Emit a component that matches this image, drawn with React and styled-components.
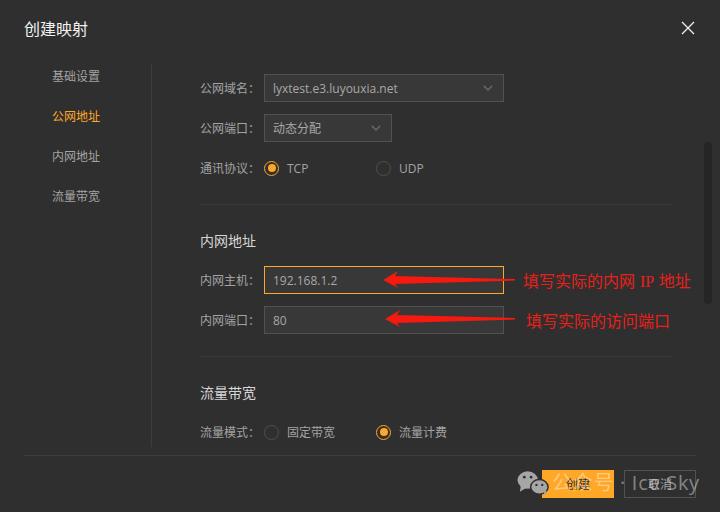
import styled, { createGlobalStyle } from 'styled-components';

const GlobalStyle = createGlobalStyle`
  html, body {
    margin: 0;
    padding: 0;
    background: #2f2f2f;
  }
`;

const Dialog = styled.div`
  position: relative;
  width: 720px;
  height: 512px;
  overflow: hidden;
  display: flex;
  flex-direction: column;
  background: #2f2f2f;
  color: #a3a3a3;
  font-family: "Open Sans", "Noto Sans CJK SC", sans-serif;
  font-size: 12px;
`;

const Header = styled.div`
  height: 56px;
  flex: none;
  box-sizing: border-box;
  padding: 0 25px 1px 24px;
  display: flex;
  align-items: center;
  justify-content: space-between;
`;

const Title = styled.div`
  font-size: 16px;
  color: #f2f2f2;
`;

const Body = styled.div`
  height: 399px;
  flex: none;
  padding: 8px 8px 0 24px;
  box-sizing: border-box;
  display: flex;
`;

const Sidebar = styled.div`
  width: 128px;
  height: 383px;
  flex: none;
  box-sizing: border-box;
  border-right: 1px solid #3d3d3d;
`;

const NavList = styled.div`
  margin-top: -8px;
  display: flex;
  flex-direction: column;
`;

const NavItem = styled.div`
  height: 40px;
  padding-left: 28px;
  display: flex;
  align-items: center;
  color: ${props => props.active ? '#ffa726' : '#a3a3a3'};
`;

const Content = styled.div`
  width: 472px;
  flex: none;
  margin-left: 48px;
  padding-top: 10px;
`;

const Row = styled.div`
  height: 28px;
  margin-bottom: 12px;
  display: flex;
  align-items: center;
`;

const Label = styled.div`
  width: 64px;
  flex: none;
`;

const Field = styled.div`
  width: ${props => props.width}px;
  height: 28px;
  box-sizing: border-box;
  padding: 0 10px 0 8px;
  display: flex;
  align-items: center;
  justify-content: space-between;
  background: #383838;
  border: 1px solid ${props => props.focused ? '#ffa726' : '#515151'};
  color: #a8a8a8;
`;

const RadioItem = styled.div`
  width: ${props => props.width}px;
  display: flex;
  align-items: center;
  gap: 8px;
`;

const RadioCircle = styled.span`
  width: 15px;
  height: 15px;
  box-sizing: border-box;
  border-radius: 50%;
  border: ${props => props.checked ? '1.5px solid #ffa726' : '1px solid #515151'};
  display: flex;
  align-items: center;
  justify-content: center;

  &::after {
    content: '';
    display: ${props => props.checked ? 'block' : 'none'};
    width: 8px;
    height: 8px;
    border-radius: 50%;
    background: #ffa726;
  }
`;

const Divider = styled.div`
  height: 1px;
  background: #3a3a3a;
  margin: ${props => props.margin};
`;

const SectionTitle = styled.div`
  height: 20px;
  line-height: 20px;
  margin-bottom: 15px;
  font-size: 14px;
  color: #d6d6d6;
`;

const Scrollbar = styled.div`
  width: 8px;
  height: 162px;
  margin: 78px 0 0 32px;
  flex: none;
  border-radius: 4px;
  background: #252525;
`;

const Footer = styled.div`
  margin: 0 24px;
  padding-top: 14px;
  border-top: 1px solid #3d3d3d;
  display: flex;
  justify-content: flex-end;
  gap: 10px;
`;

const Button = styled.div`
  width: 72px;
  height: 28px;
  box-sizing: border-box;
  display: flex;
  align-items: center;
  justify-content: center;
  background: ${props => props.primary ? '#ffa726' : 'transparent'};
  border: ${props => props.primary ? 'none' : '1px solid #515151'};
  color: ${props => props.primary ? '#2f2f2f' : '#a3a3a3'};
`;

const Note = styled.div`
  position: absolute;
  left: ${props => props.left}px;
  top: ${props => props.top}px;
  line-height: 20px;
  font-size: 16px;
  white-space: pre;
  color: #e8201a;
`;

const NoteLatin = styled.span`
  font-family: "Liberation Serif", serif;
  word-spacing: 1px;
`;

const ArrowSvg = styled.svg`
  position: absolute;
  left: ${props => props.left}px;
  top: ${props => props.top}px;
`;

const Watermark = styled.div`
  position: absolute;
  left: 517px;
  top: 467px;
  display: flex;
  align-items: center;
  font-size: 20px;
  line-height: 32px;
  white-space: pre;
  letter-spacing: 0.7px;
  color: rgba(255, 255, 255, 0.42);
`;

const Chevron = () => (
  <svg width="10" height="6" viewBox="0 0 10 6" fill="none" stroke="#666" strokeWidth="1.6">
    <path d="M0.8 0.8 L5 5 L9.2 0.8" />
  </svg>
);

const Arrow = ({ left, top, width }) => (
  <ArrowSvg left={left} top={top} width={width} height="18" viewBox={`0 0 ${width} 18`}>
    <path d={`M0 9 L15 0 L12 5 L${width} 8 L${width} 9.5 L12 13 L15 17 Z`} fill="#f5190f" />
  </ArrowSvg>
);

const Radio = ({ checked, width, children }) => (
  <RadioItem width={width}>
    <RadioCircle checked={checked} />
    {children}
  </RadioItem>
);

function App() {
  return (
    <Dialog>
      <GlobalStyle />
      <Header>
        <Title>创建映射</Title>
        <svg width="14" height="14" viewBox="0 0 14 14" stroke="#f0f0f0" strokeWidth="1.3">
          <path d="M1 1 L13 13 M13 1 L1 13" />
        </svg>
      </Header>
      <Body>
        <Sidebar>
          <NavList>
            <NavItem>基础设置</NavItem>
            <NavItem active>公网地址</NavItem>
            <NavItem>内网地址</NavItem>
            <NavItem>流量带宽</NavItem>
          </NavList>
        </Sidebar>
        <Content>
          <Row>
            <Label>公网域名：</Label>
            <Field width={240}>lyxtest.e3.luyouxia.net<Chevron /></Field>
          </Row>
          <Row>
            <Label>公网端口：</Label>
            <Field width={128}>动态分配<Chevron /></Field>
          </Row>
          <Row>
            <Label>通讯协议：</Label>
            <Radio checked width={112}>TCP</Radio>
            <Radio>UDP</Radio>
          </Row>
          <Divider margin="22px 0 26px" />
          <SectionTitle>内网地址</SectionTitle>
          <Row>
            <Label>内网主机：</Label>
            <Field width={240} focused>192.168.1.2</Field>
          </Row>
          <Row>
            <Label>内网端口：</Label>
            <Field width={240}>80</Field>
          </Row>
          <Divider margin="22px 0 26px" />
          <SectionTitle>流量带宽</SectionTitle>
          <Row>
            <Label>流量模式：</Label>
            <Radio width={112}>固定带宽</Radio>
            <Radio checked>流量计费</Radio>
          </Row>
        </Content>
        <Scrollbar />
      </Body>
      <Footer>
        <Button primary>创建</Button>
        <Button>取消</Button>
      </Footer>

      <Arrow left={383} top={271} width={132} />
      <Arrow left={385} top={310} width={130} />
      <Note left={523} top={271}>填写实际的内网<NoteLatin> IP </NoteLatin>地址</Note>
      <Note left={526} top={311}>填写实际的访问端口</Note>

      <Watermark>
        <svg width="35" height="28" viewBox="0 0 36 28" fill="#a6a6a6">
          <ellipse cx="11" cy="11" rx="10.5" ry="9" />
          <path d="M4 16 L3 23 L11 18 Z" />
          <ellipse cx="23" cy="18" rx="9" ry="7.5" stroke="#2f2f2f" strokeWidth="1.5" />
          <path d="M27 23 L30 27 L30 21 Z" />
          <circle cx="7.5" cy="8" r="1.4" fill="#2f2f2f" />
          <circle cx="14.5" cy="8" r="1.4" fill="#2f2f2f" />
          <circle cx="20" cy="16" r="1.2" fill="#2f2f2f" />
          <circle cx="26" cy="16" r="1.2" fill="#2f2f2f" />
        </svg>
        公众号 · Ice Sky
      </Watermark>
    </Dialog>
  );
}

export default App;
